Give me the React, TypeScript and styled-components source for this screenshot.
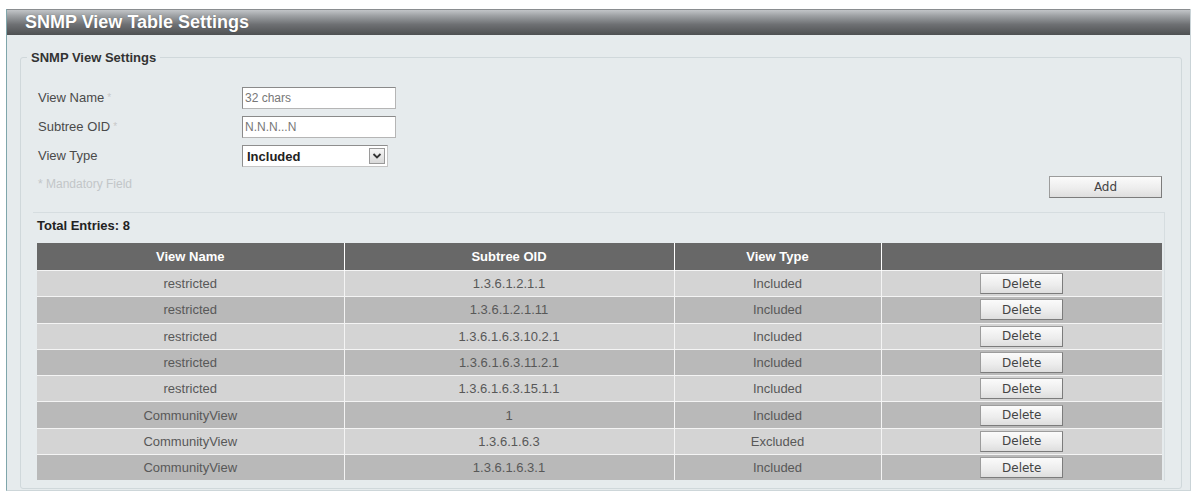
import React from "react";
import styled, { createGlobalStyle } from "styled-components";

const GlobalStyle = createGlobalStyle`
  html, body {
    margin: 0;
    padding: 0;
    background: #ffffff;
    font-family: "Liberation Sans", Arial, sans-serif;
  }
`;

const Page = styled.div`
  padding: 9px 4px 0 6px;
`;

const Panel = styled.section`
  width: 1185px;
  box-sizing: border-box;
  height: 482px;
  background: #e6ebed;
  border-left: 1px solid #7fa6ab;
  border-right: 1px solid #c9d3d7;
  border-bottom: 1px solid #cdd6d9;
  display: flex;
  flex-direction: column;
`;

const TitleBar = styled.header`
  height: 26px;
  box-sizing: border-box;
  border-top: 1px solid #8a8d90;
  background: linear-gradient(
    to bottom,
    #c2c5c8 0%,
    #9fa2a5 22%,
    #6e7073 58%,
    #4e5052 100%
  );
  display: flex;
  align-items: center;
  padding-left: 18px;
  color: #ffffff;
  font-weight: bold;
  font-size: 18px;
  text-shadow: 0 0 1px rgba(0, 0, 0, 0.35);
`;

const Body = styled.div`
  padding: 15px 8px 0 13px;
`;

const Fieldset = styled.fieldset`
  margin: 0;
  padding: 0 16px 7px 12px;
  border: 1px solid #d0d8db;
  border-radius: 3px;
  min-width: 0;
`;

const Legend = styled.legend`
  margin-left: -6px;
  padding: 0 4px;
  font-size: 13px;
  font-weight: bold;
  color: #333333;
`;

const Form = styled.div`
  margin-top: 22px;
  padding-left: 5px;
  display: grid;
  grid-template-columns: 204px auto;
  grid-auto-rows: 29px;
  align-items: start;
`;

const Label = styled.label`
  font-size: 13px;
  color: #4a4a4a;
  line-height: 21px;
`;

const Req = styled.span`
  color: #c8c8c8;
  font-size: 10px;
  margin-left: 3px;
  vertical-align: top;
`;

const TextInput = styled.input`
  width: 154px;
  height: 22px;
  box-sizing: border-box;
  border: 1px solid #b5b5b5;
  border-top-color: #8a8a8a;
  border-left-color: #8a8a8a;
  background: #ffffff;
  padding: 0 2px;
  font-family: "Liberation Sans", Arial, sans-serif;
  font-size: 12px;
  color: #666666;
  outline: none;
  &::placeholder {
    color: #777777;
  }
`;

const SelectBox = styled.div`
  width: 146px;
  height: 22px;
  box-sizing: border-box;
  border: 1px solid #8e8e8e;
  border-right-color: #c5c5c5;
  border-bottom-color: #c5c5c5;
  background: #ffffff;
  display: flex;
  align-items: center;
  justify-content: space-between;
  padding-left: 4px;
  padding-right: 2px;
  font-size: 13px;
  font-weight: bold;
  color: #222222;
`;

const SelectArrow = styled.span`
  width: 16px;
  height: 16px;
  box-sizing: border-box;
  border: 1px solid #9a9a9a;
  background: linear-gradient(to bottom, #f6f6f6, #d9d9d9);
  display: flex;
  align-items: center;
  justify-content: center;
`;

const ActionRow = styled.div`
  margin-top: 2px;
  display: flex;
  align-items: center;
  justify-content: space-between;
  padding-left: 5px;
  padding-right: 3px;
  height: 22px;
`;

const Note = styled.span`
  font-size: 12px;
  color: #c2c6c8;
  margin-top: -6px;
`;

const Button = styled.button<{ $w: number; $h: number }>`
  width: ${(p) => p.$w}px;
  height: ${(p) => p.$h}px;
  box-sizing: border-box;
  border: 1px solid #9c9c9c;
  border-right-color: #7c7c7c;
  border-bottom-color: #7c7c7c;
  background: linear-gradient(to bottom, #fbfbfb 0%, #ececec 60%, #dedede 100%);
  font-family: "DejaVu Sans", Verdana, sans-serif;
  font-size: 12px;
  color: #444444;
  padding: 0;
  cursor: pointer;
`;

const TableBox = styled.div`
  margin-top: 14px;
  border-top: 1px solid #d6dde0;
  border-right: 1px solid #d6dde0;
  padding: 4px 1px 1px 4px;
`;

const Total = styled.div`
  font-size: 13px;
  font-weight: bold;
  color: #222222;
  line-height: 18px;
  margin-bottom: 8px;
`;

const Table = styled.table`
  width: 1125px;
  border-collapse: collapse;
  table-layout: fixed;
`;

const Th = styled.th`
  height: 27px;
  padding: 0;
  background: #686868;
  color: #ffffff;
  font-size: 13px;
  font-weight: bold;
  text-align: center;
  border-left: 1px solid #ffffff;
  &:first-child {
    border-left: none;
  }
`;

const Tr = styled.tr<{ $alt: boolean }>`
  background: ${(p) => (p.$alt ? "#b9b9b9" : "#d4d4d4")};
  border-top: 1px solid #f4f4f4;
`;

const Td = styled.td`
  height: 25.3px;
  padding: 0;
  text-align: center;
  font-size: 13px;
  color: #585858;
  border-left: 1px solid #f4f4f4;
  &:first-child {
    border-left: none;
  }
`;

const Chevron = () => (
  <svg width="10" height="8" viewBox="0 0 10 8">
    <path d="M1.5 2 L5 5.5 L8.5 2" fill="none" stroke="#333" strokeWidth="1.8" />
  </svg>
);

type Entry = { name: string; oid: string; type: string };

const entries: Entry[] = [
  { name: "restricted", oid: "1.3.6.1.2.1.1", type: "Included" },
  { name: "restricted", oid: "1.3.6.1.2.1.11", type: "Included" },
  { name: "restricted", oid: "1.3.6.1.6.3.10.2.1", type: "Included" },
  { name: "restricted", oid: "1.3.6.1.6.3.11.2.1", type: "Included" },
  { name: "restricted", oid: "1.3.6.1.6.3.15.1.1", type: "Included" },
  { name: "CommunityView", oid: "1", type: "Included" },
  { name: "CommunityView", oid: "1.3.6.1.6.3", type: "Excluded" },
  { name: "CommunityView", oid: "1.3.6.1.6.3.1", type: "Included" },
];

export default function App() {
  return (
    <>
      <GlobalStyle />
      <Page>
        <Panel>
          <TitleBar>SNMP View Table Settings</TitleBar>
          <Body>
            <Fieldset>
              <Legend>SNMP View Settings</Legend>
              <Form>
                <Label>
                  View Name<Req>*</Req>
                </Label>
                <TextInput placeholder="32 chars" />
                <Label>
                  Subtree OID<Req>*</Req>
                </Label>
                <TextInput placeholder="N.N.N...N" />
                <Label>View Type</Label>
                <SelectBox>
                  Included
                  <SelectArrow>
                    <Chevron />
                  </SelectArrow>
                </SelectBox>
              </Form>
              <ActionRow>
                <Note>* Mandatory Field</Note>
                <Button $w={113} $h={22}>Add</Button>
              </ActionRow>
              <TableBox>
                <Total>Total Entries: 8</Total>
                <Table>
                  <colgroup>
                    <col style={{ width: 307 }} />
                    <col style={{ width: 330 }} />
                    <col style={{ width: 207 }} />
                    <col style={{ width: 281 }} />
                  </colgroup>
                  <thead>
                    <tr>
                      <Th>View Name</Th>
                      <Th>Subtree OID</Th>
                      <Th>View Type</Th>
                      <Th />
                    </tr>
                  </thead>
                  <tbody>
                    {entries.map((e, i) => (
                      <Tr key={i} $alt={i % 2 === 1}>
                        <Td>{e.name}</Td>
                        <Td>{e.oid}</Td>
                        <Td>{e.type}</Td>
                        <Td>
                          <Button $w={83} $h={21}>Delete</Button>
                        </Td>
                      </Tr>
                    ))}
                  </tbody>
                </Table>
              </TableBox>
            </Fieldset>
          </Body>
        </Panel>
      </Page>
    </>
  );
}
